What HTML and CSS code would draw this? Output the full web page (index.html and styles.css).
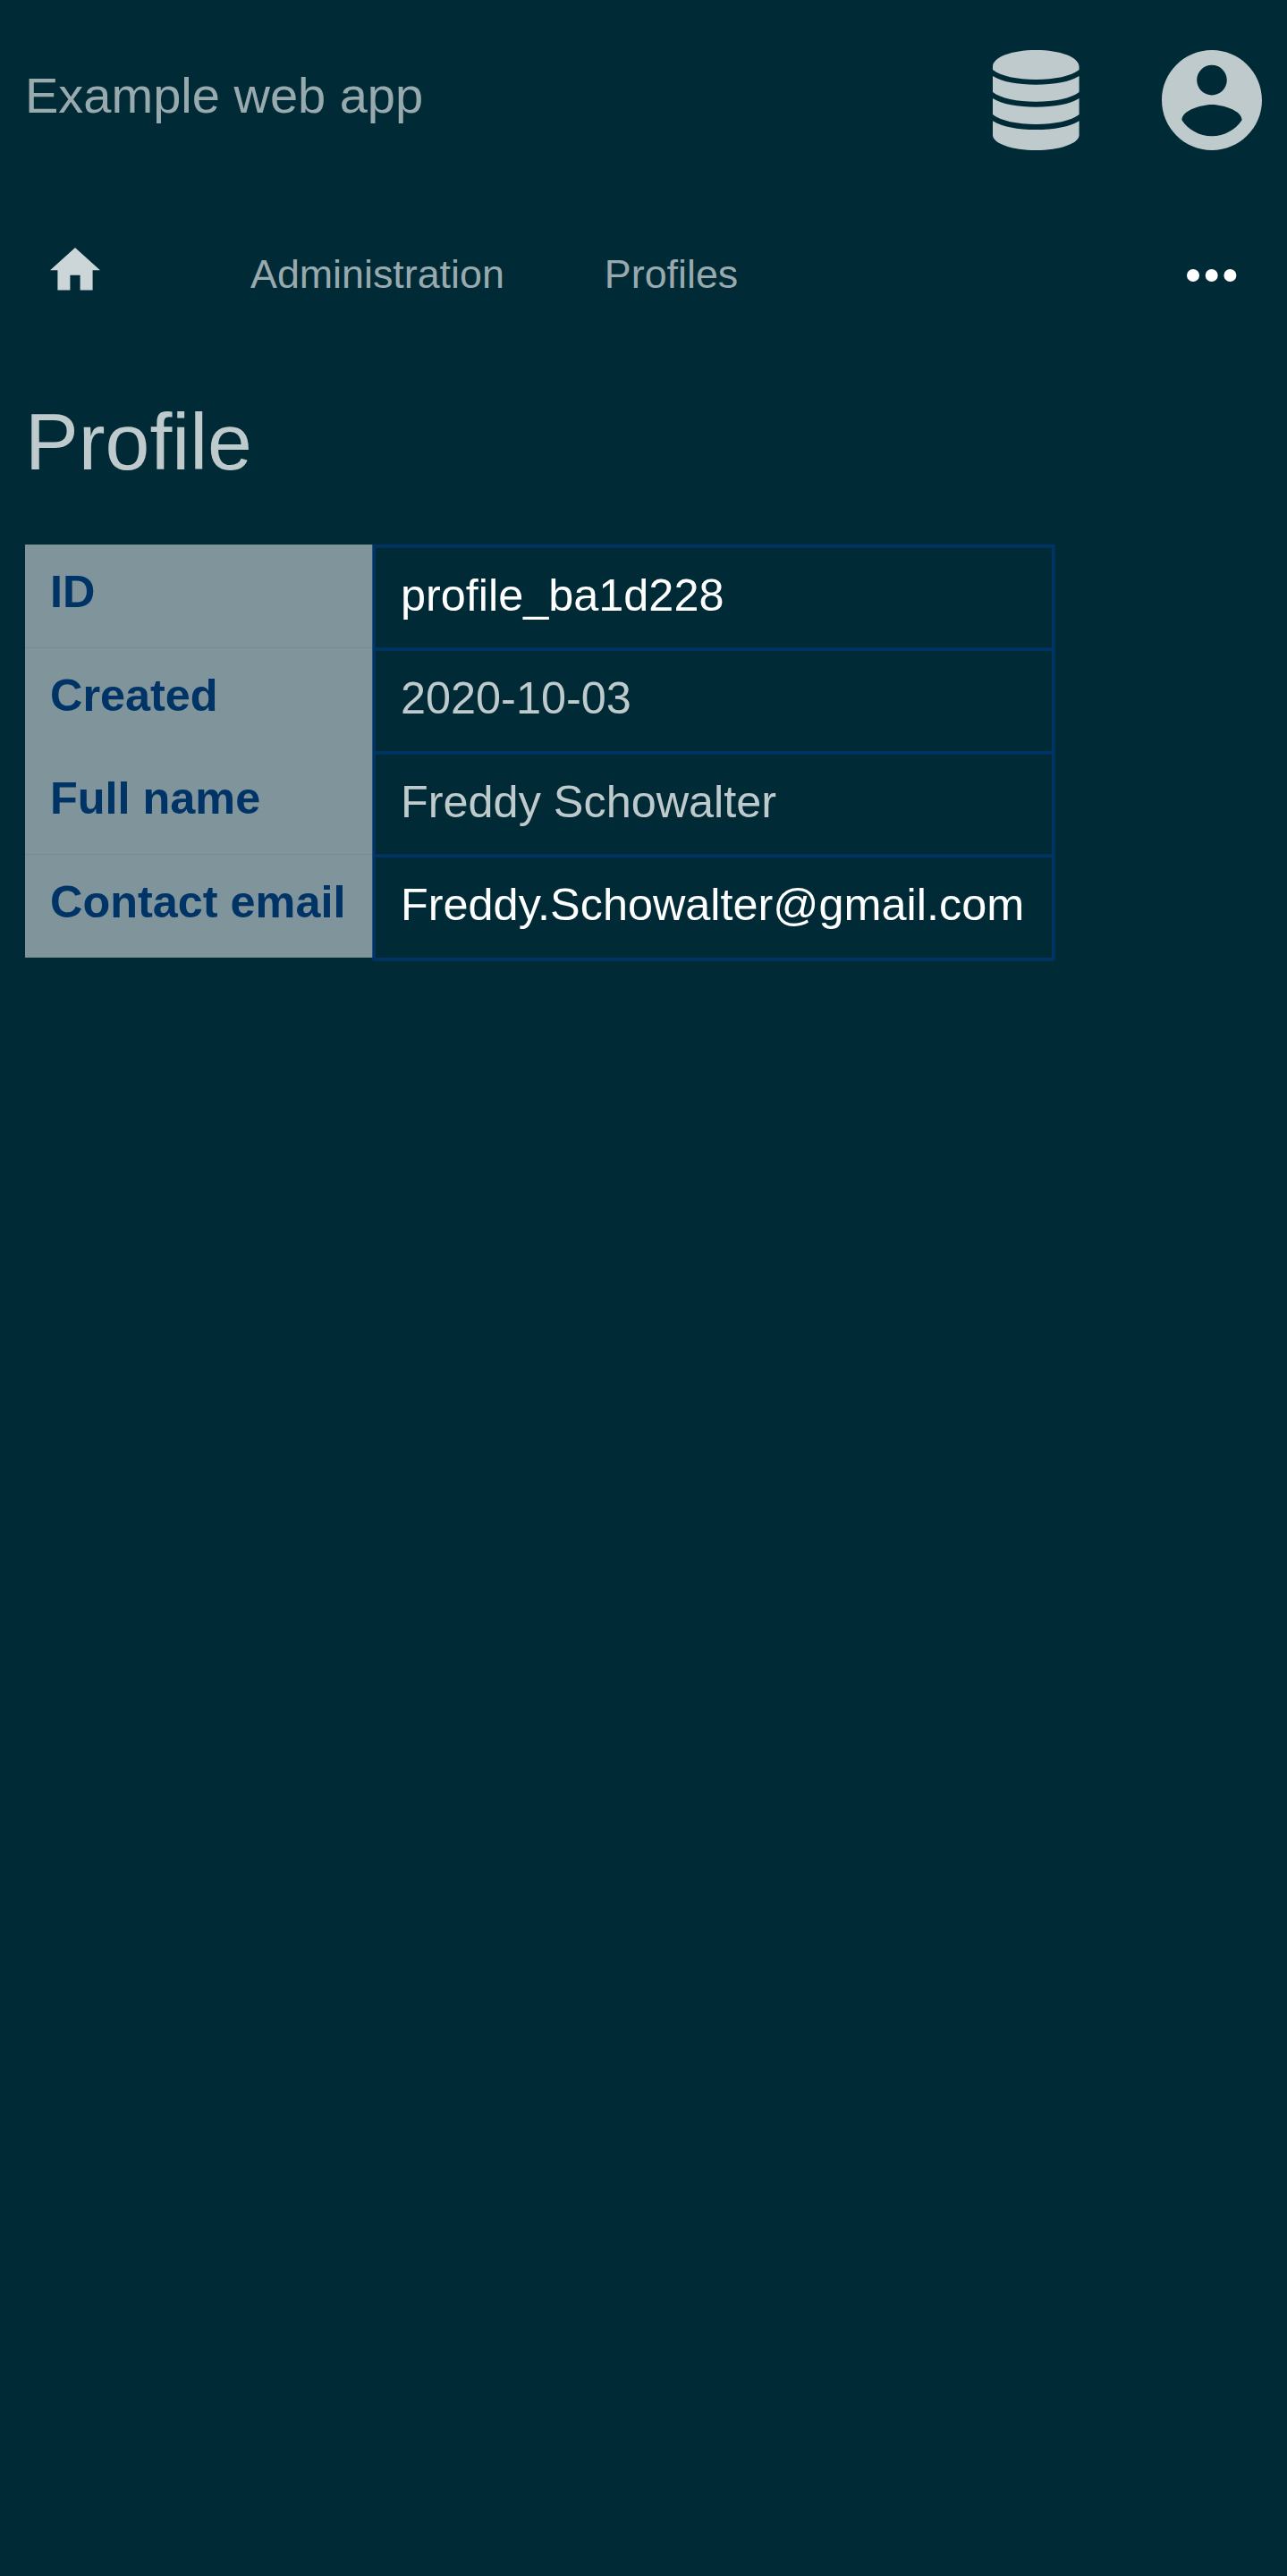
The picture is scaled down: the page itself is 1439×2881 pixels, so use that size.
FILE: index.html
```html
<!DOCTYPE html>
<html lang="en">
<head>
<meta charset="utf-8">
<title>Profile</title>
<link rel="stylesheet" href="styles.css">
</head>
<body>
<header class="topbar">
  <span class="brand">Example web app</span>
  <div class="actions">
    <svg class="icon-db" viewBox="0 0 96.6 112"><path d="M0 18.5C0 8 21 0 48.3 0S96.6 8 96.6 18.5V22C88 29 69 33 48.3 33S8.600 29 0 22zM0 29C10 35.500 28 38.700 48.300 38.700S86.600 35.500 96.600 29V47C88 54 69 57.700 48.300 57.700S8.600 54 0 47zM0 54C10 60.500 28 63.700 48.300 63.700S86.600 60.500 96.600 54V72C88 79 69 83 48.300 83S8.600 79 0 72zM0 79.200C10 85.700 28 89 48.300 89S86.600 85.700 96.600 79.200V95C96.600 104.500 75 112 48.300 112S0 104.500 0 95z"/></svg>
    <svg class="icon-user" viewBox="2 2 20 20"><path d="M12 2C6.48 2 2 6.48 2 12s4.480 10 10 10 10-4.480 10-10S17.520 2 12 2zm0 3c1.660 0 3 1.340 3 3s-1.340 3-3 3-3-1.340-3-3 1.340-3 3-3zm0 14.200c-2.500 0-4.710-1.280-6-3.220.030-1.990 4-3.080 6-3.080 1.990 0 5.970 1.090 6 3.080-1.290 1.940-3.500 3.220-6 3.220z"/></svg>
  </div>
</header>
<nav class="nav">
  <a class="home"><svg class="icon-home" viewBox="2 3 20 17"><path d="M10 20v-6h4v6h5v-8h3L12 3 2 12h3v8z"/></svg></a>
  <a class="link">Administration</a>
  <a class="link">Profiles</a>
  <a class="more"><svg class="icon-more" viewBox="0 0 56 14"><circle cx="7" cy="7" r="7"/><circle cx="27.700" cy="7" r="7"/><circle cx="48.400" cy="7" r="7"/></svg></a>
</nav>
<main class="content">
  <h1 class="title">Profile</h1>
  <dl class="details">
    <dt>ID</dt><dd class="strong">profile_ba1d228</dd>
    <dt>Created</dt><dd>2020-10-03</dd>
    <dt>Full name</dt><dd>Freddy Schowalter</dd>
    <dt>Contact email</dt><dd class="strong">Freddy.Schowalter@gmail.com</dd>
  </dl>
</main>
</body>
</html>
```
FILE: styles.css
```css
* { box-sizing: border-box; }
body { margin: 0; min-height: 2881px; background: #002b36; color: #bfcacd; font-family: "Liberation Sans", Arial, sans-serif; }
svg { display: block; fill: currentColor; }

.topbar { display: flex; justify-content: space-between; align-items: flex-start; height: 224px; padding: 56px 28.5px 56px 28px; }
.brand { margin-top: 19px; font-size: 56px; line-height: 63px; color: #99aaaf; }
.actions { display: flex; gap: 91.8px; }
.icon-db { width: 96.6px; height: 112px; }
.icon-user { width: 112px; height: 112px; }

.nav { display: flex; align-items: flex-start; height: 168px; padding: 53px 56px 0; font-size: 44.8px; line-height: 50px; color: #99aaaf; }
.home { margin-right: 168px; color: #ccd5d7; }
.icon-home { width: 56px; height: 47.6px; }
.link { margin: 4px 112px 0 0; }
.more { margin: 24px 0 0 auto; color: #fff; }
.icon-more { width: 56px; height: 14px; }

.content { padding: 52px 28px 0; }
.title { margin: 0 0 65px; font-size: 89.6px; font-weight: 400; line-height: 100px; }

.details {
  display: grid;
  grid-template-columns: 389px 762px;
  grid-template-rows: 116px 115px 116px 115px;
  margin: 0;
  font-size: 50.4px;
  line-height: 57px;
  white-space: nowrap;
}
.details dt { padding: 24px 28px 0; background: #80959b; color: #003366; font-weight: 700; }
.details dt:nth-of-type(odd) { border-bottom: 1px solid #748b92; }
.details dd {
  margin: 0;
  padding: 25px 0 0 28px;
  border: solid #003366;
  border-width: 3px 3px 0;
  box-shadow: inset 0 1px rgba(0, 51, 102, .6), -1px 0 rgba(0, 51, 102, .7), 1px 0 rgba(0, 51, 102, .6);
}
.details dd:nth-of-type(even) {
  padding-top: 24px;
  box-shadow: 0 -1px rgba(0, 51, 102, .6), -1px 0 rgba(0, 51, 102, .7), 1px 0 rgba(0, 51, 102, .6);
}
.details dd:last-child {
  height: 118px;
  border-bottom-width: 3px;
  box-shadow: 0 -1px rgba(0, 51, 102, .6), 0 1px rgba(0, 51, 102, .6), -1px 0 rgba(0, 51, 102, .7), 1px 0 rgba(0, 51, 102, .6);
}
.details .strong { color: #fff; }
```
